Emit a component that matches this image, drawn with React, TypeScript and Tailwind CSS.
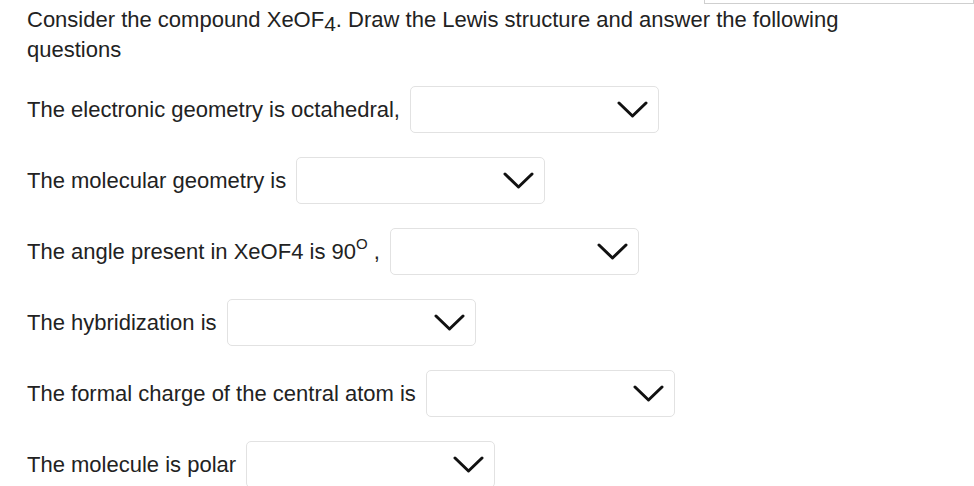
const rows: { label: React.ReactNode }[] = [
  { label: 'The electronic geometry is octahedral,' },
  { label: 'The molecular geometry is' },
  {
    label: (
      <>
        The angle present in XeOF4 is 90<sup className="relative top-[1px] text-[15px] align-top leading-none">O</sup> ,
      </>
    ),
  },
  { label: 'The hybridization is' },
  { label: 'The formal charge of the central atom is' },
  { label: 'The molecule is polar' },
];

function Chevron() {
  return (
    <svg width="31" height="17" viewBox="0 0 31 17" fill="none" className="shrink-0">
      <path d="M2 2 L15.5 15 L29 2" stroke="#111" strokeWidth="3" strokeLinecap="round" strokeLinejoin="round" />
    </svg>
  );
}

function Select() {
  return (
    <div className="ml-[10px] flex h-[47px] w-[249px] items-center justify-end rounded-[5px] border border-[#e2e2e2] bg-white pr-[10px]">
      <Chevron />
    </div>
  );
}

export default function App() {
  return (
    <div
      className="relative h-[486px] w-[974px] overflow-hidden bg-white pl-[27px] pt-[5px] text-[22px] text-[#222]"
      style={{ fontFamily: '"Liberation Sans", Arial, sans-serif' }}
    >
      <div className="absolute left-[704px] right-0 top-[-20px] h-[24px] border border-[#cfcfcf]" />
      <p className="leading-[30px]">
        Consider the compound XeOF<sub className="relative top-[4px] align-baseline text-[21px]">4</sub>. Draw the Lewis structure and answer the following
        <br />
        questions
      </p>
      <div className="mt-[21px] flex flex-col gap-[24px]">
        {rows.map((r, i) => (
          <div key={i} className="flex items-center">
            <span className="whitespace-nowrap">{r.label}</span>
            <Select />
          </div>
        ))}
      </div>
    </div>
  );
}
